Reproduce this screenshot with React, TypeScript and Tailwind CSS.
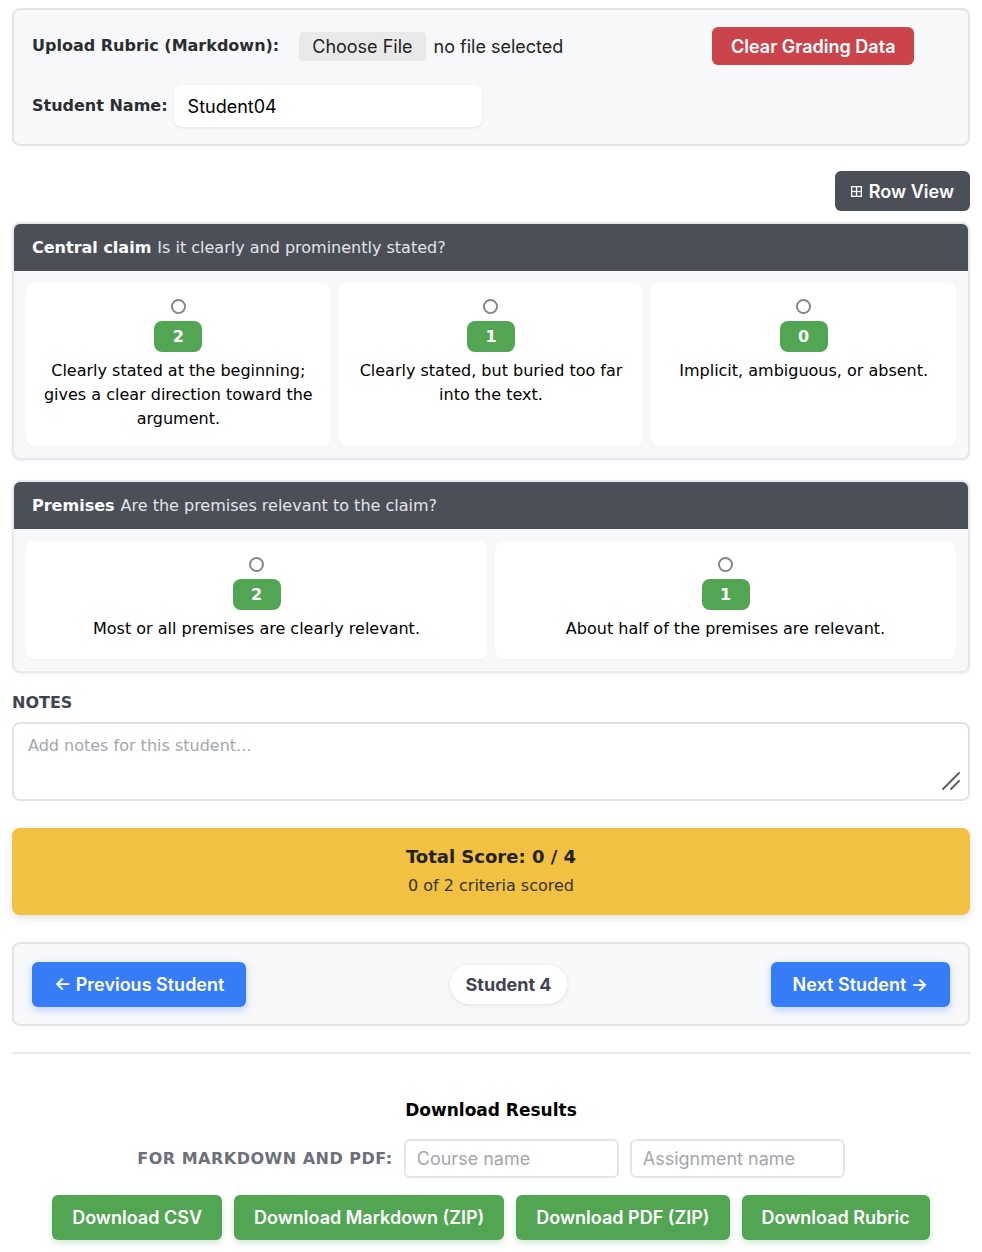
import React from 'react';

const body = { fontFamily: '"DejaVu Sans", Verdana, sans-serif' };
const ui = { fontFamily: 'Inter, Roboto, "Liberation Sans", sans-serif' };

interface Level {
  score: number;
  text: string;
}

interface Criterion {
  title: string;
  question: string;
  levels: Level[];
}

const criteria: Criterion[] = [
  {
    title: 'Central claim',
    question: 'Is it clearly and prominently stated?',
    levels: [
      { score: 2, text: 'Clearly stated at the beginning; gives a clear direction toward the argument.' },
      { score: 1, text: 'Clearly stated, but buried too far into the text.' },
      { score: 0, text: 'Implicit, ambiguous, or absent.' },
    ],
  },
  {
    title: 'Premises',
    question: 'Are the premises relevant to the claim?',
    levels: [
      { score: 2, text: 'Most or all premises are clearly relevant.' },
      { score: 1, text: 'About half of the premises are relevant.' },
    ],
  },
];

/** Tarjeta de un criterio con sus niveles. */
function CriterionCard({ c }: { c: Criterion }) {
  const wide = c.levels.length === 3;
  return (
    <div className="overflow-hidden rounded-lg border-2 border-[#e6e8ec] bg-[#f7f8fa] shadow-[0_1px_3px_rgba(0,0,0,0.06)]">
      <div className="flex h-[47px] items-center gap-[6px] bg-[#4b5058] px-[18px] text-[16px]" style={body}>
        <span className="font-bold text-white">{c.title}</span>
        <span className="text-[#e2e4e8]">{c.question}</span>
      </div>
      <div className={`grid ${wide ? 'grid-cols-3' : 'grid-cols-2'} gap-2 p-3`}>
        {c.levels.map((l) => (
          <div
            key={l.score}
            className={`flex flex-col items-center rounded-lg bg-white px-3 pt-4 text-center shadow-[0_1px_2px_rgba(0,0,0,0.04)] ${
              wide ? 'pb-[15px]' : 'pb-[18px]'
            }`}
          >
            <span className="h-[15px] w-[15px] rounded-full border-2 border-[#858585] bg-white" />
            <span
              className="mt-[7px] flex h-[31px] w-12 items-center justify-center rounded-lg bg-[#52a552] text-[16px] font-bold text-white"
              style={body}
            >
              {l.score}
            </span>
            <p className="mt-[7px] text-[16px] leading-6 text-black" style={body}>
              {l.text}
            </p>
          </div>
        ))}
      </div>
    </div>
  );
}

export default function App() {
  const greenBtn =
    'rounded-md bg-[#52a552] px-5 py-[9px] text-[18px] font-semibold text-white shadow-[0_3px_6px_rgba(82,165,82,0.25)]';
  const blueBtn =
    'rounded-md bg-[#367cf6] px-[22px] py-[9px] text-[18px] font-semibold text-white shadow-[0_3px_8px_rgba(54,124,246,0.3)]';

  return (
    <div className="min-h-screen bg-white px-3 pt-2 pb-3" style={ui}>
      {/* Cabecera: rúbrica y estudiante */}
      <div className="rounded-lg border-2 border-[#e3e5e9] bg-[#f7f8fa] px-[18px] pb-[17px] pt-[17px]">
        <div className="flex items-center">
          <div className="flex w-[680px] items-center">
            <span className="text-[16px] font-bold text-[#2b2d31]" style={body}>
              Upload Rubric (Markdown):
            </span>
            <span className="ml-[20px] rounded bg-[#e9e9e9] px-[13px] py-[1px] text-[18px] text-[#222]">Choose File</span>
            <span className="ml-2 text-[18px] text-[#222]">no file selected</span>
          </div>
          <button className="h-[38px] rounded-md bg-[#cc444b] px-[19px] text-[18px] font-semibold text-white">
            Clear Grading Data
          </button>
        </div>
        <div className="mt-[20px] flex items-center">
          <span className="text-[16px] font-bold text-[#2b2d31]" style={body}>
            Student Name:
          </span>
          <div className="ml-[6px] flex h-[42px] w-[308px] items-center rounded-lg bg-white px-[14px] text-[18px] text-black shadow-[0_1px_3px_rgba(0,0,0,0.08)]">
            Student04
          </div>
        </div>
      </div>

      <div className="mt-[25px] flex justify-end">
        <button className="flex h-10 items-center gap-[7px] rounded-md bg-[#4b5058] px-4 text-[18px] font-semibold text-white">
          <svg width="11" height="11" viewBox="0 0 11 11" fill="none" stroke="white" strokeWidth="1.3">
            <rect x="0.65" y="0.65" width="9.7" height="9.7" />
            <line x1="5.5" y1="0.65" x2="5.5" y2="10.35" />
            <line x1="0.65" y1="5.5" x2="10.35" y2="5.5" />
          </svg>
          Row View
        </button>
      </div>

      <div className="mt-[11px] flex flex-col gap-5">
        {criteria.map((c) => (
          <CriterionCard key={c.title} c={c} />
        ))}
      </div>

      {/* Notas */}
      <div className="mt-[18px] text-[16px] font-bold uppercase leading-6 text-[#3f4451]" style={body}>
        Notes
      </div>
      <div className="relative mt-[7px]">
        <textarea
          className="block h-[79px] w-full resize-none rounded-lg border-2 border-[#e0e2e6] bg-white px-[14px] py-[10px] text-[16px] leading-6 text-black placeholder:text-[#a3a7ae]"
          style={body}
          placeholder="Add notes for this student..."
        />
        <svg
          className="pointer-events-none absolute bottom-[10px] right-[9px]"
          width="20"
          height="20"
          viewBox="0 0 20 20"
          stroke="#5f6166"
          strokeWidth="2"
          strokeLinecap="round"
        >
          <line x1="2" y1="18" x2="18" y2="2" />
          <line x1="10" y1="18" x2="18" y2="10" />
        </svg>
      </div>

      {/* Puntaje total */}
      <div
        className="mt-[27px] flex h-[87px] flex-col items-center justify-center rounded-lg bg-[#f2c141] shadow-[0_3px_8px_rgba(0,0,0,0.12)]"
        style={body}
      >
        <div className="text-[18px] font-bold leading-6 text-[#222]">Total Score: 0 / 4</div>
        <div className="mt-[5px] text-[16px] leading-6 text-[#333]">0 of 2 criteria scored</div>
      </div>

      {/* Navegación */}
      <div className="mt-[27px] flex h-[84px] items-center justify-between rounded-lg border-2 border-[#e3e5e9] bg-[#f7f8fa] px-[18px]">
        <button className={blueBtn}>← Previous Student</button>
        <span className="rounded-full bg-white px-4 py-[6px] text-[18px] font-bold text-[#3f4451] shadow-[0_1px_4px_rgba(0,0,0,0.1)]">
          Student 4
        </span>
        <button className={blueBtn}>Next Student →</button>
      </div>

      <hr className="mt-[26px] border-t-2 border-[#e8e9ec]" />

      {/* Descargas */}
      <div className="mt-[44px] text-center text-[17px] font-bold leading-6 text-black" style={body}>
        Download Results
      </div>
      <div className="mt-[17px] flex items-center justify-center gap-[11px]">
        <span className="text-[16px] font-bold uppercase tracking-[0.5px] text-[#6b7079]" style={body}>
          For Markdown and PDF:
        </span>
        <input
          className="h-[39px] w-[215px] rounded-md border-2 border-[#e3e5e9] bg-white px-[11px] text-[18px] placeholder:text-[#a3a7ae]"
          placeholder="Course name"
        />
        <input
          className="h-[39px] w-[215px] rounded-md border-2 border-[#e3e5e9] bg-white px-[11px] text-[18px] placeholder:text-[#a3a7ae]"
          placeholder="Assignment name"
        />
      </div>
      <div className="mt-[17px] flex justify-center gap-3">
        <button className={greenBtn}>Download CSV</button>
        <button className={greenBtn}>Download Markdown (ZIP)</button>
        <button className={greenBtn}>Download PDF (ZIP)</button>
        <button className={greenBtn}>Download Rubric</button>
      </div>
    </div>
  );
}
